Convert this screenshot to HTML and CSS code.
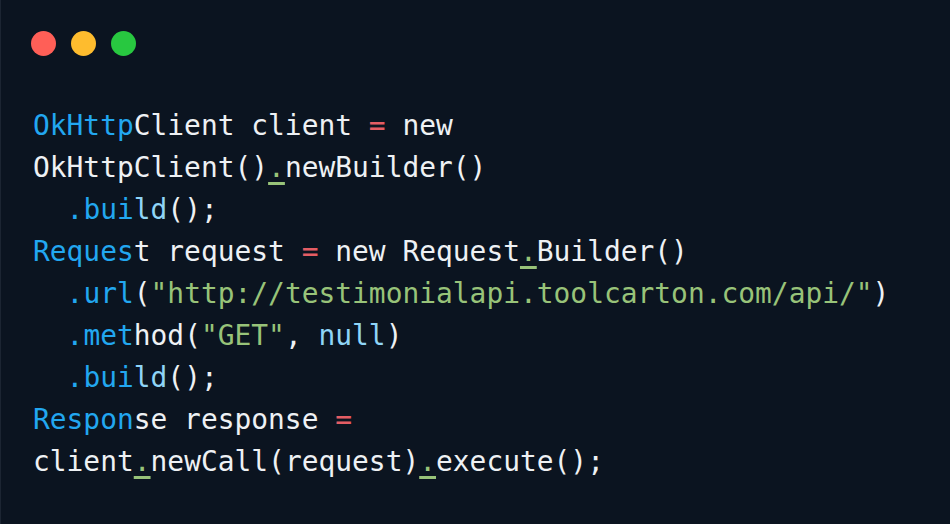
FILE: index.html
```html
<!DOCTYPE html>
<html lang="en">
<head>
<meta charset="utf-8">
<title>OkHttp snippet</title>
<link rel="stylesheet" href="styles.css">
</head>
<body>
<div class="window">
  <div class="dots">
    <span class="dot red"></span>
    <span class="dot yellow"></span>
    <span class="dot green"></span>
  </div>
<pre class="code"><span class="k">OkHttp</span>Client client <span class="op">=</span> new
OkHttpClient()<span class="mk">.</span>newBuilder()
  <span class="k">.bui</span><span class="lk">ld</span>();
<span class="k">Reques</span>t request <span class="op">=</span> new Request<span class="mk">.</span>Builder()
  <span class="k">.url</span>(<span class="s">"http://testimonialapi.toolcarton.com/api/"</span>)
  <span class="k">.met</span>hod(<span class="s">"GET"</span>, <span class="lk">null</span>)
  <span class="k">.bui</span><span class="lk">ld</span>();
<span class="k">Respon</span>se response <span class="op">=</span>
client<span class="mk">.</span>newCall(request)<span class="mk">.</span>execute();</pre>
</div>
</body>
</html>
```
FILE: styles.css
```css
html, body {
  margin: 0;
  padding: 0;
  background: #0b1420;
  height: 100%;
}

.window {
  box-sizing: border-box;
  height: 524px;
  padding: 31px 0 0 30px;
  border-left: 1px solid #1c2532;
}

.dots {
  display: flex;
  gap: 15px;
}

.dot {
  width: 25px;
  height: 25px;
  border-radius: 50%;
  display: block;
}

.red { background: #ff5f57; }
.yellow { background: #febc2e; }
.green { background: #28c840; }

.code {
  margin: 49px 0 0 2px;
  font-family: "DejaVu Sans Mono", "Liberation Mono", monospace;
  font-size: 27.9px;
  line-height: 42px;
  color: #eef1f4;
  white-space: pre;
}

.k { color: #22a7f0; }
.lk { color: #8fd5f7; }
.s { color: #98c379; }
.op { color: #e45d64; }

.mk {
  color: #98c379;
  text-decoration: underline;
  text-decoration-color: #98c379;
  text-decoration-thickness: 3px;
  text-underline-offset: 5px;
}
```
